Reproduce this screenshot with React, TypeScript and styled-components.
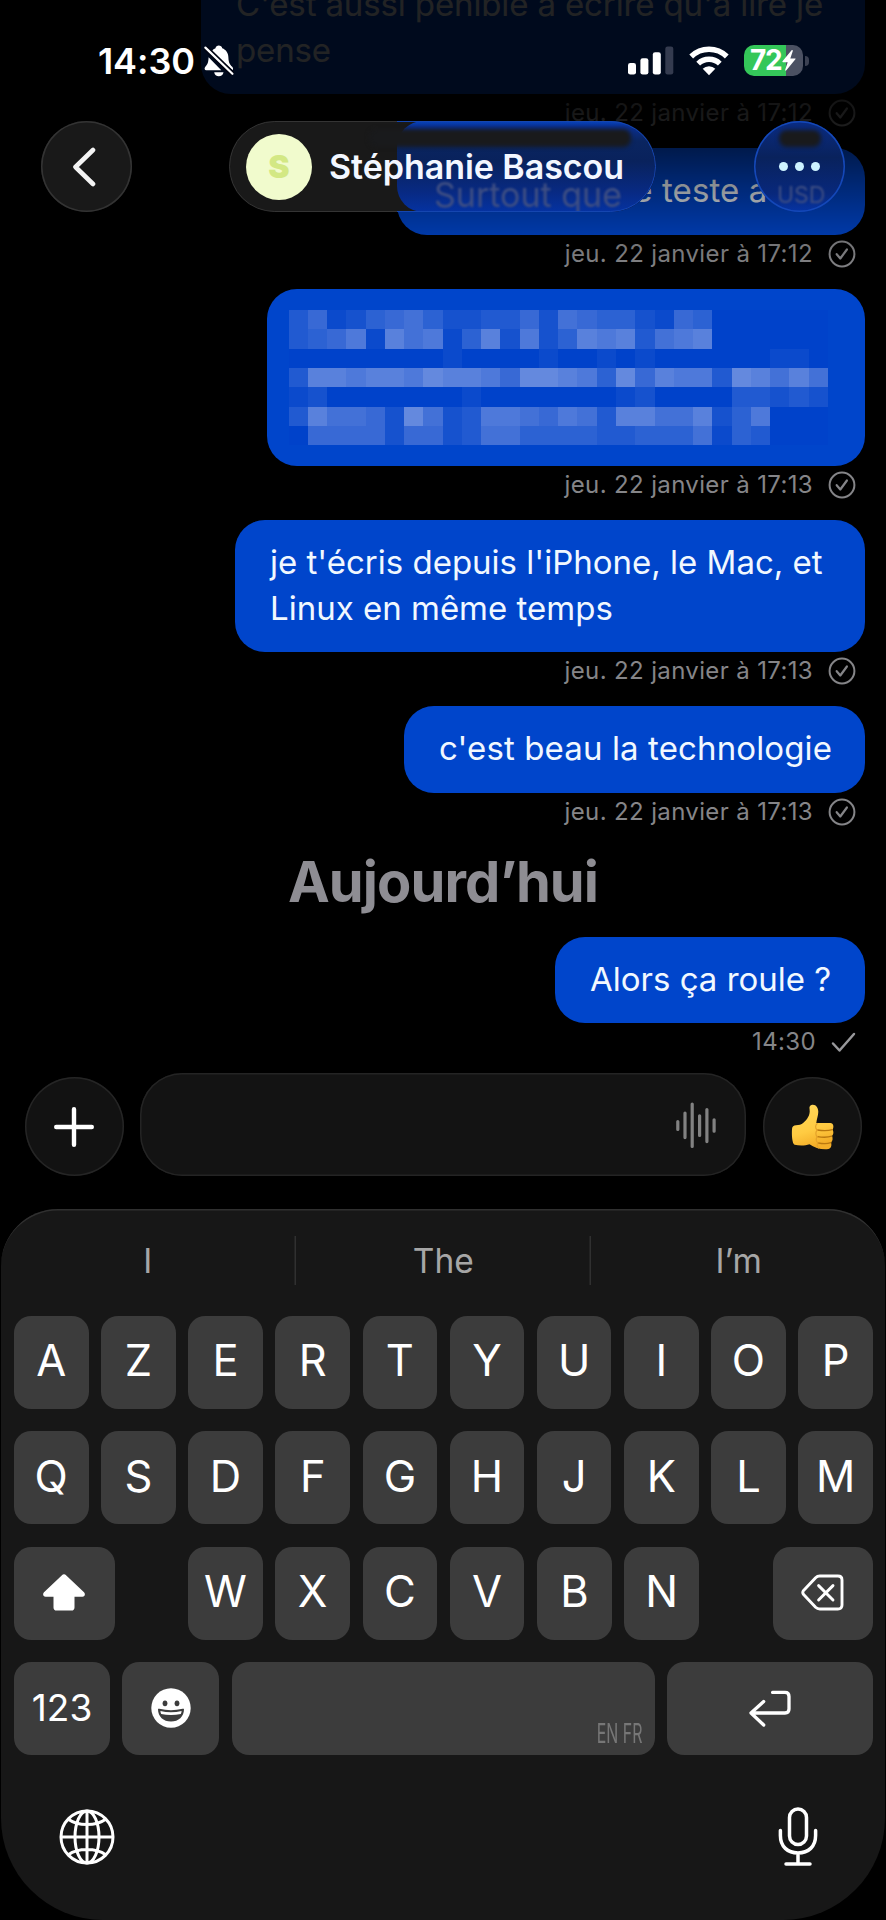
import React from "react";
import styled, { createGlobalStyle } from "styled-components";

const GlobalStyle = createGlobalStyle`
  html, body { margin: 0; padding: 0; background: #000; }
  *, *::before, *::after { box-sizing: border-box; }
  body { font-family: Inter, "Liberation Sans", sans-serif; -webkit-font-smoothing: antialiased; }
  button { font: inherit; color: inherit; border: 0; padding: 0; margin: 0; background: none; }
  svg { display: block; flex: none; }
`;

const Screen = styled.main`
  position: relative;
  width: 886px;
  height: 1920px;
  overflow: hidden;
  background: #000;
  display: flex;
  flex-direction: column;
`;

/* ---------- Conversation ---------- */

const Thread = styled.section`
  height: 1061px;
  flex: none;
  overflow: hidden;
  display: flex;
  flex-direction: column;
  justify-content: flex-end;
  padding-right: 21px;
`;

const Message = styled.article<{ $gap?: number }>`
  flex: none;
  display: flex;
  flex-direction: column;
  align-items: flex-end;
  margin-top: ${(p) => p.$gap ?? 16}px;
`;

const Bubble = styled.div<{ $width: number; $tracking?: number }>`
  width: ${(p) => p.$width}px;
  padding: 20px 0 21px 35px;
  border-radius: 30px;
  background: #0045cb;
  color: #f1f8ff;
  font-size: 33px;
  line-height: 45.5px;
  letter-spacing: ${(p) => p.$tracking ?? 0}px;
  white-space: pre-line;
`;

const Meta = styled.div`
  height: 38px;
  padding-right: 9px;
  display: flex;
  align-items: center;
  gap: 15px;
  color: #858588;
  font-size: 24px;
  line-height: 38px;
  letter-spacing: 0.36px;
`;

const Day = styled.h2`
  flex: none;
  height: 106px;
  margin: 0 -21px 0 0;
  padding-top: 1px;
  text-align: center;
  font-size: 56px;
  line-height: 100px;
  font-weight: 700;
  letter-spacing: -0.9px;
  color: #8e8d93;
`;

const Mosaic = styled.div`
  display: grid;
  grid-template-columns: repeat(28, 19.27px);
  grid-template-rows: repeat(7, 19.35px);
  width: 540px;
  height: 135.5px;
  margin: 1.5px 0 -0.5px -13.5px;
`;

const Pixel = styled.i<{ $level: number }>`
  background: ${(p) => {
    const t = p.$level / 9;
    const mix = (a: number, b: number) => Math.round(a + (b - a) * t);
    return `rgb(${mix(0, 100)}, ${mix(66, 137)}, ${mix(202, 222)})`;
  }};
`;

const mosaicRows = [
  "3512456422335265442154000000",
  "3457186714827248783678000000",
  "0000000010000100101000000110",
  "3887887988759987495877398686",
  "1200000001000000012000033232",
  "3866529623776576388668247000",
  "0555525523664444334446143000",
];

/* ---------- Top bars ---------- */

const Scrim = styled.div`
  position: absolute;
  inset: 0 0 auto 0;
  height: 290px;
  background: linear-gradient(
    to bottom,
    rgba(0, 0, 0, 0.86) 0,
    rgba(0, 0, 0, 0.86) 100px,
    rgba(0, 0, 0, 0.79) 125px,
    rgba(0, 0, 0, 0.62) 150px,
    rgba(0, 0, 0, 0.4) 190px,
    rgba(0, 0, 0, 0.2) 230px,
    rgba(0, 0, 0, 0.06) 260px,
    rgba(0, 0, 0, 0) 290px
  );
`;

const TopBars = styled.header`
  position: absolute;
  inset: 0 0 auto 0;
  height: 212px;
  color: #fff;
`;

const StatusBar = styled.div`
  height: 121px;
  padding: 0 77px 0 98px;
  display: flex;
  align-items: center;
  justify-content: space-between;
`;

const StatusGroup = styled.div<{ $gap: number }>`
  display: flex;
  align-items: center;
  gap: ${(p) => p.$gap}px;
`;

const Clock = styled.span`
  font-size: 36px;
  font-weight: 600;
  line-height: 40px;
  letter-spacing: -0.1px;
`;

const Battery = styled.div`
  position: relative;
  width: 59px;
  height: 31px;
  border-radius: 10px;
  margin-right: 6px;
  background: linear-gradient(to right, #34c759 0 42.5px, #4b5162 42.5px);
  display: flex;
  align-items: center;
  padding-left: 6px;
  font-size: 28px;
  font-weight: 700;
  letter-spacing: -1.2px;
  line-height: 31px;
  &::after {
    content: "";
    position: absolute;
    left: 61px;
    top: 10.5px;
    width: 4px;
    height: 10px;
    border-radius: 0 5px 5px 0;
    background: #3b4152;
  }
`;

const NavBar = styled.nav`
  height: 91px;
  padding: 0 41px;
  display: flex;
  justify-content: space-between;
`;

const GlassButton = styled.button<{ $tinted?: boolean }>`
  position: relative;
  width: 91px;
  height: 91px;
  border-radius: 50%;
  overflow: hidden;
  display: flex;
  align-items: center;
  justify-content: center;
  background: ${(p) => (p.$tinted ? "linear-gradient(#0a2c84, #09225c 40%, #08287c 80%, #0634a4)" : "#191919")};
  box-shadow: inset 0 0 0 1.5px ${(p) => (p.$tinted ? "#1448b8" : "#333")};
`;

const ContactPill = styled.div`
  position: relative;
  width: 427px;
  height: 91px;
  margin-left: -1px;
  border-radius: 46px;
  overflow: hidden;
  background: #191919;
  display: flex;
  align-items: center;
  padding-left: 17px;
  gap: 17px;
`;

const PillEdge = styled.div<{ $left: number; $width: number; $color: string }>`
  position: absolute;
  inset: 0;
  border-radius: 46px;
  border: 1.5px solid ${(p) => p.$color};
  clip-path: ${(p) => `inset(0 ${427 - p.$left - p.$width}px 0 ${p.$left}px)`};
`;

const PillTint = styled.div`
  position: absolute;
  inset: 0 0 0 168px;
  background: linear-gradient(#0744bd 0, #0a2f90 6px, #0a2560 20px, #09225c 40px, #082a84 72px, #0532a0 90px);
  border-radius: 26px 0 0 26px;
`;

const DarkBand = styled.div<{ $left: number; $width: number; $top: number; $height: number }>`
  position: absolute;
  left: ${(p) => p.$left}px;
  top: ${(p) => p.$top}px;
  width: ${(p) => p.$width}px;
  height: ${(p) => p.$height}px;
  border-radius: 8px;
  background: #191a1c;
  filter: blur(2px);
`;

const Ghost = styled.span<{ $left: number; $size: number }>`
  position: absolute;
  left: ${(p) => p.$left}px;
  top: 56px;
  font-size: ${(p) => p.$size}px;
  line-height: 36px;
  color: #3f4f83;
  filter: blur(1.3px);
  white-space: nowrap;
`;

const Avatar = styled.div`
  position: relative;
  width: 66px;
  height: 66px;
  border-radius: 50%;
  background: #f1fbcd;
  color: #d3e884;
  display: flex;
  align-items: center;
  justify-content: center;
  font-size: 32px;
  font-weight: 900;
`;

const ContactName = styled.h1`
  position: relative;
  margin: 0;
  font-size: 34px;
  font-weight: 600;
  line-height: 44px;
  letter-spacing: -0.05px;
  color: #f3f7ff;
  white-space: nowrap;
`;

const Dots = styled.div`
  position: relative;
  display: flex;
  gap: 7px;
  i {
    width: 9px;
    height: 9px;
    border-radius: 50%;
    background: #cdf3ff;
  }
`;

/* ---------- Composer ---------- */

const Composer = styled.section`
  flex: none;
  height: 148px;
  padding: 12px 24.5px 33px;
  display: flex;
  align-items: flex-end;
  justify-content: space-between;
`;

const RoundButton = styled.button`
  width: 99px;
  height: 99px;
  border-radius: 50%;
  background: #121212;
  box-shadow: inset 0 0 0 1.5px #252525;
  display: flex;
  align-items: center;
  justify-content: center;
`;

const Field = styled.div`
  width: 606px;
  height: 103px;
  border-radius: 42px;
  background: #131313;
  box-shadow: inset 0 0 0 1.5px #242424;
  display: flex;
  align-items: center;
  justify-content: flex-end;
  padding-right: 30px;
`;

/* ---------- Keyboard ---------- */

const Keyboard = styled.section`
  flex: none;
  height: 711px;
  margin: 0 1px;
  border-radius: 57px 57px 102px 102px;
  background: #171717;
  box-shadow: inset 0 2px 0 -0.5px #303030;
  padding: 27px 13px 0;
  color: #fff;
`;

const Suggestions = styled.div`
  display: grid;
  grid-template-columns: repeat(3, 295.5px);
  margin: 0 -14px;
  height: 80px;
`;

const Suggestion = styled.div`
  height: 49px;
  text-align: center;
  font-size: 33.5px;
  line-height: 50px;
  color: #a6a6a6;
  & + & { box-shadow: -1.5px 0 0 #303030; }
`;

const Keys = styled.div`
  display: flex;
  flex-direction: column;
  gap: 22.7px;
`;

const KeyRow = styled.div`
  display: flex;
  justify-content: space-between;
  width: 859px;
`;

const Key = styled.button<{ $width?: number; $size?: number }>`
  position: relative;
  width: ${(p) => p.$width ?? 74.5}px;
  height: 92.8px;
  border-radius: 17px;
  background: #3c3c3c;
  display: flex;
  align-items: center;
  justify-content: center;
  padding-bottom: 3px;
  font-size: ${(p) => p.$size ?? 43.5}px;
  line-height: 1;
  svg { margin-top: 2px; }
`;

const LetterGroup = styled.div`
  display: flex;
  gap: 12.75px;
`;

const Languages = styled.span`
  position: absolute;
  right: 12px;
  bottom: 6px;
  font-size: 27px;
  line-height: 30px;
  white-space: nowrap;
  color: #777;
  transform: scaleX(0.59);
  transform-origin: right;
`;

const KeyboardFooter = styled.div`
  display: flex;
  align-items: center;
  justify-content: space-between;
  padding: 0 54px 0 45px;
  margin-top: 51px;
  height: 62px;
`;

/* ---------- Icons ---------- */

const DeliveredIcon = () => (
  <svg width="28" height="28" viewBox="0 0 28 28" fill="none" stroke="#858588" strokeWidth="2">
    <circle cx="14" cy="14" r="12.4" />
    <path d="M8.7 14.2l3.6 4.3 6.6-9" strokeLinecap="round" strokeLinejoin="round" strokeWidth="2.2" />
  </svg>
);

const SentIcon = () => (
  <svg width="25" height="22" viewBox="0 0 25 22" fill="none" stroke="#98989b" strokeWidth="2.5" strokeLinecap="round" strokeLinejoin="round">
    <path d="M2 12.5L8.5 19.5L23 3" />
  </svg>
);

const MutedBellIcon = () => (
  <svg width="30" height="32" viewBox="0 0 30 32">
    <path
      fill="#fff"
      d="M7.3 7.2C8.7 4.4 10.4 3.6 11.5 3.2C11.7 1.3 13.2.5 14.8.5S18 1.4 18.2 3.2C22 4.6 24.3 7.8 24.4 12.4C24.5 17.6 26 19.5 28 21.6C29.2 22.9 29.4 24 28.6 25.2ZM4.6 12.2L17.3 25.3H2.3C.4 25.3.1 23.3 1.3 21.8C3.4 19.3 4.4 18 4.6 12.2ZM10.2 27.2H19.5C19.2 29.7 17.2 31.2 14.8 31.2S10.5 29.7 10.2 27.2Z"
    />
    <path d="M1.5 2.8L28.5 29" stroke="#000412" strokeWidth="5.6" />
    <path d="M1.4 2.6L28.4 28.8" stroke="#fff" strokeWidth="2.2" strokeLinecap="round" />
  </svg>
);

const SignalIcon = () => (
  <svg width="46" height="29" viewBox="0 0 46 29" fill="#fff">
    <rect x="0" y="17" width="8" height="11.5" rx="2.3" />
    <rect x="12.4" y="12.3" width="8" height="16.2" rx="2.3" />
    <rect x="24.8" y="6.2" width="8" height="22.3" rx="2.3" />
    <rect x="37.3" y="0.4" width="8" height="28.1" rx="2.3" fill="#343b4f" />
  </svg>
);

const WifiIcon = () => (
  <svg width="40" height="30" viewBox="0 0 40 30" fill="none" stroke="#fff" strokeWidth="5.4">
    <path d="M2.2 10.5A25.5 25.5 0 0 1 37.8 10.5" />
    <path d="M9.2 17.6A15.6 15.6 0 0 1 30.8 17.6" />
    <path d="M20 29.2L13.7 22.8A9 9 0 0 1 26.3 22.8Z" fill="#fff" stroke="none" />
  </svg>
);

const BoltIcon = () => (
  <svg width="14" height="21" viewBox="0 0 14 21" fill="#fff">
    <path d="M9.6.3L.5 11.3C.2 11.8.4 12.2 1 12.2H5.7L3.2 19.8C3 20.7 3.8 21 4.4 20.3L13.4 9.3C13.8 8.7 13.5 8.4 13 8.4H8.3L10.8 1C11 .1 10.2-.3 9.6.3Z" />
  </svg>
);

const BackIcon = () => (
  <svg width="32" height="40" viewBox="0 0 32 40" fill="none" stroke="#f4f4f4" strokeWidth="4.6" strokeLinecap="round" strokeLinejoin="round">
    <path d="M22 3L4.5 20L22 37" />
  </svg>
);

const PlusIcon = () => (
  <svg width="40" height="40" viewBox="0 0 40 40" stroke="#fff" strokeWidth="4.4" strokeLinecap="round">
    <path d="M20 2.2V37.8M2.2 20H37.8" />
  </svg>
);

const WaveformIcon = () => (
  <svg width="40" height="46" viewBox="0 0 40 46" stroke="#828282" strokeWidth="3.2" strokeLinecap="round">
    <path d="M1.8 19.6V27.4M9 11V35.6M16.2 2V44.4M23.6 13.8V33.4M30.9 7.6V39.6M38.1 17.8V29.2" />
  </svg>
);

const ThumbIcon = () => (
  <svg width="43" height="46" viewBox="0 0 43 46">
    <defs>
      <linearGradient id="thumb" x1="0" y1="0" x2="0.3" y2="1">
        <stop offset="0" stopColor="#ffd95c" />
        <stop offset="0.65" stopColor="#ffcb42" />
        <stop offset="1" stopColor="#f3ad28" />
      </linearGradient>
    </defs>
    <path
      fill="url(#thumb)"
      d="M1 25C1.2 22.2 2.7 21.3 5 21.2C8 21.2 10.2 20.8 12.4 18.8C16 15.5 19.4 11.4 18.6 5.5C18 2.5 19 1 21.2.7C25 .2 27.3 3.8 27.3 7.7C27.3 11.5 25.7 14.7 25.3 19H39.3C42.8 19.2 43 23.5 41.6 25.5C42.7 27.5 42.8 30.4 41 32C42.2 34.2 41.6 37.4 40 38.5C41.2 41.8 39.6 44.6 37.4 45C31.5 46 23.4 44 18.5 40.2C14 41.9 8 41.8 3.6 40.7C1.1 40 .6 30.5 1 25Z"
    />
    <path d="M41.3 25.7C37 27 31 26.8 26.3 26M40.8 32.2C36.5 33.6 31 33.4 26.3 32.6M39.9 38.7C36 40 31.2 39.8 26.8 38.8" fill="none" stroke="#b9780f" strokeWidth="1.3" strokeLinecap="round" />
    <path d="M26.5 19.2C24 21 24 24.5 26.3 26C24.3 28 24.4 31 26.3 32.6C24.6 34.8 25 37.5 26.8 38.8C25.6 41 26 42.6 28 44.4" fill="none" stroke="#e5a32a" strokeWidth="1.2" />
  </svg>
);

const ShiftIcon = () => (
  <svg width="42" height="37" viewBox="0 0 42 37" fill="#fff">
    <path d="M18.7 1.4C20.2 0 21.8 0 23.3 1.4L41 18.2C42.6 19.9 42 22.8 39.4 22.8H31.5V33.4C31.5 35.5 30.4 36.5 28.4 36.5H13.6C11.6 36.5 10.5 35.5 10.5 33.4V22.8H2.6C0 22.8-.6 19.9 1 18.2Z" />
  </svg>
);

const DeleteIcon = () => (
  <svg width="43" height="37" viewBox="0 0 43 37" fill="none" stroke="#fff" strokeWidth="2.9" strokeLinecap="round" strokeLinejoin="round">
    <path d="M18.8 2H36.8C39.6 2 41 3.4 41 6V31C41 33.6 39.6 35 36.8 35H18.8C17 35 15.8 34.5 14.6 33.3L2.6 20.6C1.5 19.2 1.5 17.8 2.6 16.4L14.6 3.7C15.8 2.5 17 2 18.8 2Z" />
    <path d="M17.6 11.6L32 26M32 11.6L17.6 26" />
  </svg>
);

const EmojiIcon = () => (
  <svg width="40" height="40" viewBox="0 0 40 40">
    <circle cx="20" cy="20" r="19.7" fill="#fff" />
    <ellipse cx="14" cy="15.3" rx="2.4" ry="2.9" fill="#3c3c3c" />
    <ellipse cx="26" cy="15.3" rx="2.4" ry="2.9" fill="#3c3c3c" />
    <path d="M7 21.2C7 20.6 7.6 20.6 8.4 20.8C16 22.7 24 22.7 31.6 20.8C32.4 20.6 33 20.6 33 21.2C33 28.5 27.6 33.5 20 33.5S7 28.5 7 21.2Z" fill="#3c3c3c" />
    <path d="M9.4 23C16.2 24.6 23.8 24.6 30.6 23C30.5 24.3 30.2 25.2 29.8 25.9C23.5 27.4 16.5 27.4 10.2 25.9C9.8 25.2 9.5 24.3 9.4 23Z" fill="#fff" />
  </svg>
);

const ReturnIcon = () => (
  <svg width="42" height="37" viewBox="0 0 42 37" fill="none" stroke="#fff" strokeWidth="3.3" strokeLinecap="round" strokeLinejoin="round">
    <path d="M23.6 2.4H36C38.8 2.4 40 3.8 40 6.5V19C40 21.8 38.8 23 36 23H2M14.7 11.5L2 23L14.7 35" />
  </svg>
);

const GlobeIcon = () => (
  <svg width="56" height="56" viewBox="0 0 56 56" fill="none" stroke="#fff" strokeWidth="3">
    <circle cx="28" cy="28" r="26" />
    <ellipse cx="28" cy="28" rx="12" ry="26" />
    <path d="M28 2V54M2 28H54M9.3 10.3C19 17.3 37 17.3 46.7 10.3M9.3 45.7C19 38.7 37 38.7 46.7 45.7" />
  </svg>
);

const MicIcon = () => (
  <svg width="40" height="60" viewBox="0 0 40 60" fill="none" stroke="#fff" strokeWidth="3.5" strokeLinecap="round">
    <rect x="11.5" y="2" width="17" height="35.5" rx="8.5" />
    <path d="M2.4 23.5V28.5C2.4 39.5 9.5 46 20 46S37.6 39.5 37.6 28.5V23.5M20 46V57M8 57H32" />
  </svg>
);

/* ---------- Page ---------- */

const Stamp = ({ time }: { time: string }) => (
  <Meta>
    <span>jeu. 22 janvier à {time}</span>
    <DeliveredIcon />
  </Meta>
);

const Letters = ({ letters }: { letters: string }) => (
  <>
    {letters.split("").map((l) => (
      <Key key={l}>{l}</Key>
    ))}
  </>
);

export default function App() {
  return (
    <>
      <GlobalStyle />
      <Screen>
        <Thread>
          <Message>
            <Bubble $width={664} $tracking={-0.13}>{"C'est aussi pénible à écrire qu'à lire je\npense"}</Bubble>
            <Stamp time="17:12" />
          </Message>
          <Message>
            <Bubble $width={468} $tracking={0.12}>Surtout que je teste a</Bubble>
            <Stamp time="17:12" />
          </Message>
          <Message>
            <Bubble $width={598}>
              <Mosaic>
                {mosaicRows.flatMap((row, y) =>
                  row.split("").map((level, x) => <Pixel key={`${x}-${y}`} $level={Number(level)} />)
                )}
              </Mosaic>
            </Bubble>
            <Stamp time="17:13" />
          </Message>
          <Message>
            <Bubble $width={630}>{"je t'écris depuis l'iPhone, le Mac, et\nLinux en même temps"}</Bubble>
            <Stamp time="17:13" />
          </Message>
          <Message>
            <Bubble $width={461} $tracking={0.12}>c'est beau la technologie</Bubble>
            <Stamp time="17:13" />
          </Message>
          <Day>Aujourd’hui</Day>
          <Message $gap={0}>
            <Bubble $width={310}>Alors ça roule ?</Bubble>
            <Meta>
              <span>14:30</span>
              <SentIcon />
            </Meta>
          </Message>
        </Thread>

        <Scrim />
        <TopBars>
          <StatusBar>
            <StatusGroup $gap={9}>
              <Clock>14:30</Clock>
              <MutedBellIcon />
            </StatusGroup>
            <StatusGroup $gap={15}>
              <SignalIcon />
              <WifiIcon />
              <Battery>
                72
                <BoltIcon />
              </Battery>
            </StatusGroup>
          </StatusBar>
          <NavBar>
            <GlassButton aria-label="Retour">
              <BackIcon />
            </GlassButton>
            <ContactPill>
              <PillTint />
              <DarkBand $left={140} $width={262} $top={8} $height={18} />
              <Ghost $left={205} $size={34}>Surtout que</Ghost>
              <PillEdge $left={0} $width={168} $color="#343434" />
              <PillEdge $left={168} $width={259} $color="#1546b0" />
              <Avatar>S</Avatar>
              <ContactName>Stéphanie Bascou</ContactName>
            </ContactPill>
            <GlassButton $tinted aria-label="Options">
              <DarkBand $left={25} $width={42} $top={9} $height={17} />
              <Ghost $left={23} $size={23}>USD</Ghost>
              <Dots>
                <i />
                <i />
                <i />
              </Dots>
            </GlassButton>
          </NavBar>
        </TopBars>

        <Composer>
          <RoundButton aria-label="Ajouter">
            <PlusIcon />
          </RoundButton>
          <Field>
            <WaveformIcon />
          </Field>
          <RoundButton aria-label="Pouce">
            <ThumbIcon />
          </RoundButton>
        </Composer>

        <Keyboard>
          <Suggestions>
            <Suggestion>I</Suggestion>
            <Suggestion>The</Suggestion>
            <Suggestion>I’m</Suggestion>
          </Suggestions>
          <Keys>
            <KeyRow>
              <Letters letters="AZERTYUIOP" />
            </KeyRow>
            <KeyRow>
              <Letters letters="QSDFGHJKLM" />
            </KeyRow>
            <KeyRow>
              <Key $width={100.5} aria-label="Maj">
                <ShiftIcon />
              </Key>
              <LetterGroup>
                <Letters letters="WXCVBN" />
              </LetterGroup>
              <Key $width={100.5} aria-label="Effacer">
                <DeleteIcon />
              </Key>
            </KeyRow>
            <KeyRow>
              <Key $width={96} $size={37}>123</Key>
              <Key $width={97} aria-label="Emoji">
                <EmojiIcon />
              </Key>
              <Key $width={423} aria-label="Espace">
                <Languages>EN FR</Languages>
              </Key>
              <Key $width={206} aria-label="Retour à la ligne">
                <ReturnIcon />
              </Key>
            </KeyRow>
          </Keys>
          <KeyboardFooter>
            <GlobeIcon />
            <MicIcon />
          </KeyboardFooter>
        </Keyboard>
      </Screen>
    </>
  );
}
